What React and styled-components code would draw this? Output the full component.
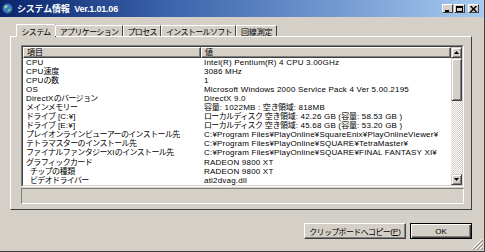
import React from "react";
import styled, { createGlobalStyle } from "styled-components";

const Global = createGlobalStyle`
  html, body { margin: 0; padding: 0; background: #d4d0c8; }
  body { width: 485px; height: 252px; overflow: hidden; }
  * { box-sizing: border-box; }
`;

const FONT = `"Liberation Sans", "Noto Sans CJK JP", sans-serif`;

const Win = styled.div`
  width: 485px;
  height: 252px;
  background: #d4d0c8;
  display: flex;
  flex-direction: column;
  font-family: ${FONT};
  font-size: 8px;
  color: #000;
  border-bottom: 1px solid #404040;
  border-right: 1px solid #404040;
  position: relative;
`;

const TitleBar = styled.div`
  height: 17px;
  background: linear-gradient(to right, #0a246a, #3a64ac 35%, #a6caf0);
  display: flex;
  align-items: center;
  padding: 0 5px 0 2px;
  color: #fff;
  font-size: 9px;
  font-weight: bold;
  gap: 4px;
`;

const TitleText = styled.span`
  flex: 1;
  white-space: pre;
  letter-spacing: -0.2px;
`;

const CtlGroup = styled.div`
  display: flex;
  gap: 1px;
  align-items: center;
`;

const CtlBtn = styled.div`
  width: 11px;
  height: 9px;
  background: #d4d0c8;
  border: 1px solid;
  border-color: #fff #404040 #404040 #fff;
  display: flex;
  align-items: center;
  justify-content: center;
  margin-left: ${(p) => (p.$gap ? "2px" : "0")};
`;

const Body = styled.div`
  flex: 1;
  display: flex;
  flex-direction: column;
  padding: 6px 12px 0 10px;
`;

const TabRow = styled.div`
  display: flex;
  align-items: flex-end;
  padding-left: 8px;
  height: 13px;
  position: relative;
  z-index: 2;
`;

const Tab = styled.div`
  height: ${(p) => (p.$active ? "13px" : "11px")};
  padding: ${(p) => (p.$active ? "1px 4.5px 0" : "0 3.5px")};
  margin: ${(p) => (p.$active ? "0 -1px -1px -2px" : "0")};
  background: #d4d0c8;
  border-left: 1px solid #fff;
  border-top: 1px solid #fff;
  border-right: 1px solid #404040;
  border-top-left-radius: 1px;
  display: flex;
  align-items: ${(p) => (p.$active ? "flex-start" : "center")};
  white-space: nowrap;
`;

const Panel = styled.div`
  height: 174px;
  border: 1px solid;
  border-color: #fff #404040 #404040 #fff;
  display: flex;
  flex-direction: column;
  padding: 8px 7px 5px 10px;
  gap: 1px;
`;

const ListView = styled.div`
  height: 142px;
  flex: none;
  border: 1px solid;
  border-color: #808080 #fff #fff #808080;
  display: flex;
`;

const ListInner = styled.div`
  flex: 1;
  display: flex;
  border: 1px solid;
  border-color: #404040 #d4d0c8 #d4d0c8 #404040;
  background: #fff;
  overflow: hidden;
`;

const Table = styled.div`
  flex: 1;
  display: flex;
  flex-direction: column;
  overflow: hidden;
`;

const HeaderRow = styled.div`
  display: flex;
  height: 11px;
  flex: none;
`;

const HeaderCell = styled.div`
  width: ${(p) => (p.$w ? `${p.$w}px` : "auto")};
  flex: ${(p) => (p.$w ? "none" : "1")};
  background: #d4d0c8;
  border: 1px solid;
  border-color: #fff #404040 #404040 #fff;
  box-shadow: inset -1px -1px 0 #808080;
  padding-left: 3px;
  display: flex;
  align-items: center;
  line-height: 9px;
`;

const Row = styled.div`
  display: flex;
  height: 9.05px;
  line-height: 9px;
  white-space: nowrap;
  flex: none;
`;

const Cell = styled.div`
  width: ${(p) => (p.$w ? `${p.$w}px` : "auto")};
  flex: ${(p) => (p.$w ? "none" : "1")};
  padding-left: ${(p) => (p.$indent ? 7 : 3)}px;
  overflow: hidden;
`;

const Run = styled.span`
  letter-spacing: ${(p) =>
    p.$kind === "kana" ? "-0.08em" : p.$kind === "kanji" ? "-0.02em" : "0.2px"};
`;

const ScrollBar = styled.div`
  width: 11px;
  flex: none;
  display: flex;
  flex-direction: column;
  background: repeating-conic-gradient(#d4d0c8 0 25%, #fff 0 50%) 0 0 / 2px 2px;
`;

const ScrollBtn = styled.div`
  height: 11px;
  flex: none;
  background: #d4d0c8;
  border: 1px solid;
  border-color: #d4d0c8 #404040 #404040 #d4d0c8;
  box-shadow: inset 1px 1px 0 #fff, inset -1px -1px 0 #808080;
  display: flex;
  align-items: center;
  justify-content: center;
`;

const Thumb = styled.div`
  height: 43px;
  flex: none;
  background: #d4d0c8;
  border: 1px solid;
  border-color: #d4d0c8 #404040 #404040 #d4d0c8;
  box-shadow: inset 1px 1px 0 #fff, inset -1px -1px 0 #808080;
`;

const Track = styled.div`
  flex: 1;
`;

const StatusBox = styled.div`
  height: 16px;
  flex: none;
  border: 1px solid;
  border-color: #808080 #fff #fff #808080;
`;

const ButtonRow = styled.div`
  display: flex;
  justify-content: flex-end;
  gap: 4px;
  padding-top: 13px;
`;

const Button = styled.div`
  height: 16px;
  width: ${(p) => p.$w}px;
  background: #d4d0c8;
  border: 1px solid;
  border-color: ${(p) => (p.$default ? "#000" : "#fff #404040 #404040 #fff")};
  box-shadow: ${(p) =>
    p.$default
      ? "inset 1px 1px 0 #fff, inset -1px -1px 0 #404040, inset -2px -2px 0 #808080"
      : "inset -1px -1px 0 #808080"};
  display: flex;
  align-items: center;
  justify-content: center;
  white-space: nowrap;
`;

const Grip = styled.svg`
  position: absolute;
  right: 1px;
  bottom: 1px;
`;

const classify = (ch) => {
  if (/[\u3040-\u30ff\uff61-\uff9f]/.test(ch)) return "kana";
  if (/[\u4e00-\u9fff]/.test(ch)) return "kanji";
  return "latin";
};

function T({ children }) {
  const s = String(children);
  const runs = [];
  for (const ch of s) {
    const k = classify(ch);
    if (runs.length && runs[runs.length - 1].k === k) runs[runs.length - 1].t += ch;
    else runs.push({ k, t: ch });
  }
  return runs.map((r, i) => (
    <Run key={i} $kind={r.k}>{r.t}</Run>
  ));
}

const rows = [
  ["CPU", "Intel(R) Pentium(R) 4 CPU 3.00GHz"],
  ["CPU速度", "3086 MHz"],
  ["CPUの数", "1"],
  ["OS", "Microsoft Windows 2000 Service Pack 4 Ver 5.00.2195"],
  ["DirectXのバージョン", "DirectX 9.0"],
  ["メインメモリー", "容量: 1022MB : 空き領域: 818MB"],
  ["ドライブ [C:¥]", "ローカルディスク 空き領域: 42.26 GB (容量: 58.53 GB )"],
  ["ドライブ [E:¥]", "ローカルディスク 空き領域: 45.68 GB (容量: 53.20 GB )"],
  ["プレイオンラインビューアーのインストール先", "C:¥Program Files¥PlayOnline¥SquareEnix¥PlayOnlineViewer¥"],
  ["テトラマスターのインストール先", "C:¥Program Files¥PlayOnline¥SQUARE¥TetraMaster¥"],
  ["ファイナルファンタジーXIのインストール先", "C:¥Program Files¥PlayOnline¥SQUARE¥FINAL FANTASY XI¥"],
  ["グラフィックカード", "RADEON 9800 XT"],
  ["チップの種類", "RADEON 9800 XT", true],
  ["ビデオドライバー", "ati2dvag.dll", true],
];

const tabs = ["システム", "アプリケーション", "プロセス", "インストールソフト", "回線測定"];

export default function App() {
  return (
    <>
      <Global />
      <Win>
        <TitleBar>
          <svg width="11" height="11" viewBox="0 0 11 11">
            <circle cx="5.5" cy="5.5" r="5" fill="#3a7cc8" stroke="#1a3a70" strokeWidth="0.6" />
            <path d="M2 4 Q4 2 6 3 Q5 5 3 6 Z" fill="#6cbf4a" />
            <path d="M6 6 Q8 5 9 7 Q7 9 6 8 Z" fill="#6cbf4a" />
            <circle cx="4" cy="3.5" r="1.2" fill="#cfe6ff" opacity="0.7" />
          </svg>
          <TitleText>{"システム情報  Ver.1.01.06"}</TitleText>
          <CtlGroup>
            <CtlBtn>
              <svg width="7" height="6" viewBox="0 0 7 6"><rect x="1" y="4" width="4" height="2" fill="#000" /></svg>
            </CtlBtn>
            <CtlBtn>
              <svg width="7" height="6" viewBox="0 0 7 6"><rect x="0.5" y="0.5" width="6" height="5" fill="none" stroke="#000" /><rect x="0" y="0" width="7" height="2" fill="#000" /></svg>
            </CtlBtn>
            <CtlBtn $gap>
              <svg width="7" height="6" viewBox="0 0 7 6"><path d="M0.5 0 L6.5 6 M6.5 0 L0.5 6" stroke="#000" strokeWidth="1.4" /></svg>
            </CtlBtn>
          </CtlGroup>
        </TitleBar>
        <Body>
          <TabRow>
            {tabs.map((t, i) => (
              <Tab key={t} $active={i === 0}><T>{t}</T></Tab>
            ))}
          </TabRow>
          <Panel>
            <ListView>
              <ListInner>
                <Table>
                  <HeaderRow>
                    <HeaderCell $w={178}>項目</HeaderCell>
                    <HeaderCell>値</HeaderCell>
                  </HeaderRow>
                  {rows.map(([k, v, ind]) => (
                    <Row key={k}>
                      <Cell $w={178} $indent={ind}><T>{k}</T></Cell>
                      <Cell><T>{v}</T></Cell>
                    </Row>
                  ))}
                </Table>
                <ScrollBar>
                  <ScrollBtn>
                    <svg width="5" height="3" viewBox="0 0 5 3"><path d="M2.5 0 L5 3 L0 3 Z" fill="#000" /></svg>
                  </ScrollBtn>
                  <Thumb />
                  <Track />
                  <ScrollBtn>
                    <svg width="5" height="3" viewBox="0 0 5 3"><path d="M0 0 L5 0 L2.5 3 Z" fill="#000" /></svg>
                  </ScrollBtn>
                </ScrollBar>
              </ListInner>
            </ListView>
            <StatusBox />
          </Panel>
          <ButtonRow>
            <Button $w={102}><T>クリップボードへコピー</T>(<u>P</u>)</Button>
            <Button $w={62} $default>OK</Button>
          </ButtonRow>
        </Body>
        <Grip width="12" height="12" viewBox="0 0 12 12">
          <path d="M11 1 L1 11 M11 5 L5 11 M11 9 L9 11" stroke="#fff" strokeWidth="1" />
          <path d="M12 2 L2 12 M12 6 L6 12 M12 10 L10 12" stroke="#808080" strokeWidth="1" />
        </Grip>
      </Win>
    </>
  );
}
